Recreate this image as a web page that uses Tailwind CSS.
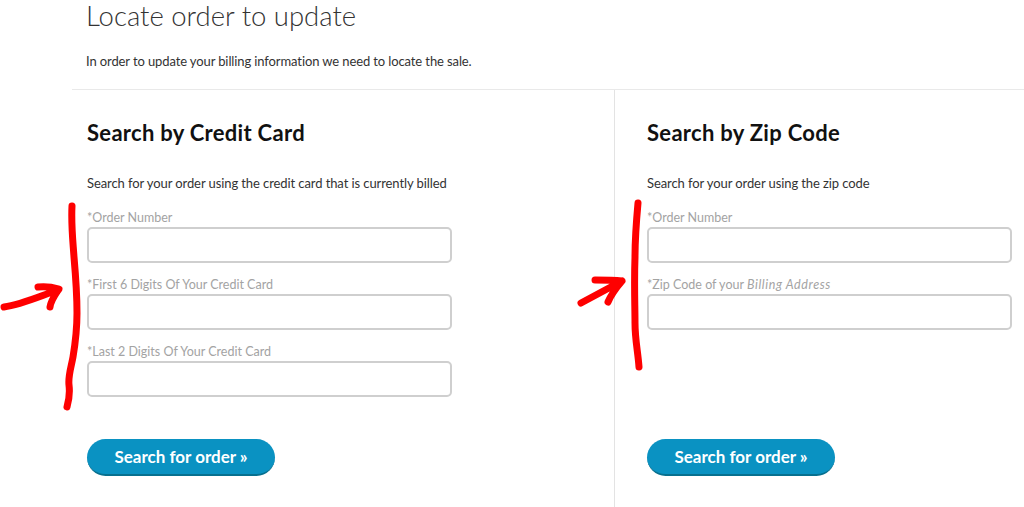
<!DOCTYPE html>
<html lang="en">
<head>
    <meta charset="UTF-8">
    <title>Locate order to update</title>
    <script src="https://cdn.jsdelivr.net/npm/@tailwindcss/browser@4"></script>
</head>
<body class="bg-white font-['Lato','Open_Sans',sans-serif] text-[#333] overflow-hidden h-[507px]">
    <div class="relative pl-[72px] h-[507px] overflow-hidden">
        <div class="pl-[14px] h-[89px]">
            <h1 class="text-[27.5px] font-light leading-[32px] text-[#333]">Locate order to update</h1>
            <p class="mt-[20px] text-[13px] leading-[18px] text-[#333] tracking-[-0.11px]">In order to update your billing information we need to locate the sale.</p>
        </div>
        <div class="flex border-t border-[#e9e9e9] h-[418px]">
            <section class="w-[543px] border-r border-[#e3e3e3] pl-[15px]">
                <h2 class="mt-[30px] text-[22px] leading-[26px] font-bold text-[#111] tracking-[0.3px]">Search by Credit Card</h2>
                <p class="mt-[28px] text-[13px] leading-[18px] text-[#333] tracking-[-0.09px]">Search for your order using the credit card that is currently billed</p>
                <div class="mt-[17px] flex flex-col gap-[13px] w-[365px]">
                    <label class="block">
                        <span class="block text-[12.5px] leading-[18px] text-[#a3a3a3]">*Order Number</span>
                        <input class="block w-full h-[36px] border-2 border-[#cfcfcf] rounded-[5px] bg-white">
                    </label>
                    <label class="block">
                        <span class="block text-[12.5px] leading-[18px] text-[#a3a3a3]">*First 6 Digits Of Your Credit Card</span>
                        <input class="block w-full h-[36px] border-2 border-[#cfcfcf] rounded-[5px] bg-white">
                    </label>
                    <label class="block">
                        <span class="block text-[12.5px] leading-[18px] text-[#a3a3a3]">*Last 2 Digits Of Your Credit Card</span>
                        <input class="block w-full h-[36px] border-2 border-[#cfcfcf] rounded-[5px] bg-white">
                    </label>
                </div>
                <button class="mt-[42px] w-[188px] h-[37px] rounded-full bg-[#0a92c2] border-b-2 border-[#07708f] text-white text-[17px] font-bold">Search for order »</button>
            </section>
            <section class="pl-[32px]">
                <h2 class="mt-[30px] text-[22px] leading-[26px] font-bold text-[#111] tracking-[0.3px]">Search by Zip Code</h2>
                <p class="mt-[28px] text-[13px] leading-[18px] text-[#333] tracking-[-0.09px]">Search for your order using the zip code</p>
                <div class="mt-[17px] flex flex-col gap-[13px] w-[365px]">
                    <label class="block">
                        <span class="block text-[12.5px] leading-[18px] text-[#a3a3a3]">*Order Number</span>
                        <input class="block w-full h-[36px] border-2 border-[#cfcfcf] rounded-[5px] bg-white">
                    </label>
                    <label class="block">
                        <span class="block text-[12.5px] leading-[18px] text-[#a3a3a3]">*Zip Code of your <em class="tracking-[0.6px]">Billing Address</em></span>
                        <input class="block w-full h-[36px] border-2 border-[#cfcfcf] rounded-[5px] bg-white">
                    </label>
                </div>
                <button class="mt-[109px] w-[188px] h-[37px] rounded-full bg-[#0a92c2] border-b-2 border-[#07708f] text-white text-[17px] font-bold">Search for order »</button>
            </section>
        </div>
        <!-- hand drawn red marks on top of the page -->
        <svg class="absolute left-0 top-0 w-[1024px] h-[507px] pointer-events-none" viewBox="0 0 1024 507" fill="none" stroke="#fe0000" stroke-linecap="round" stroke-linejoin="round">
            <path stroke-width="7" d="M72 206C71 225 73 242 74 257C76 280 77 296 77 313C77 330 75 345 73 357C71 368 68 376 69 385C70 393 69 400 67 407"/>
            <path stroke-width="7" d="M4 307C20 305 38 297 58 290M38 287C46 286 52 287 59 289C55 295 51 300 50 307"/>
            <path stroke-width="7" d="M638 203C636 225 635 240 635 257C634 285 635 305 635 323C635 340 638 352 639 367"/>
            <path stroke-width="7" d="M581 303C592 297 605 290 622 281M595 280C604 280 613 280 622 281C616 288 611 295 608 302"/>
        </svg>
    </div>
</body>
</html>
